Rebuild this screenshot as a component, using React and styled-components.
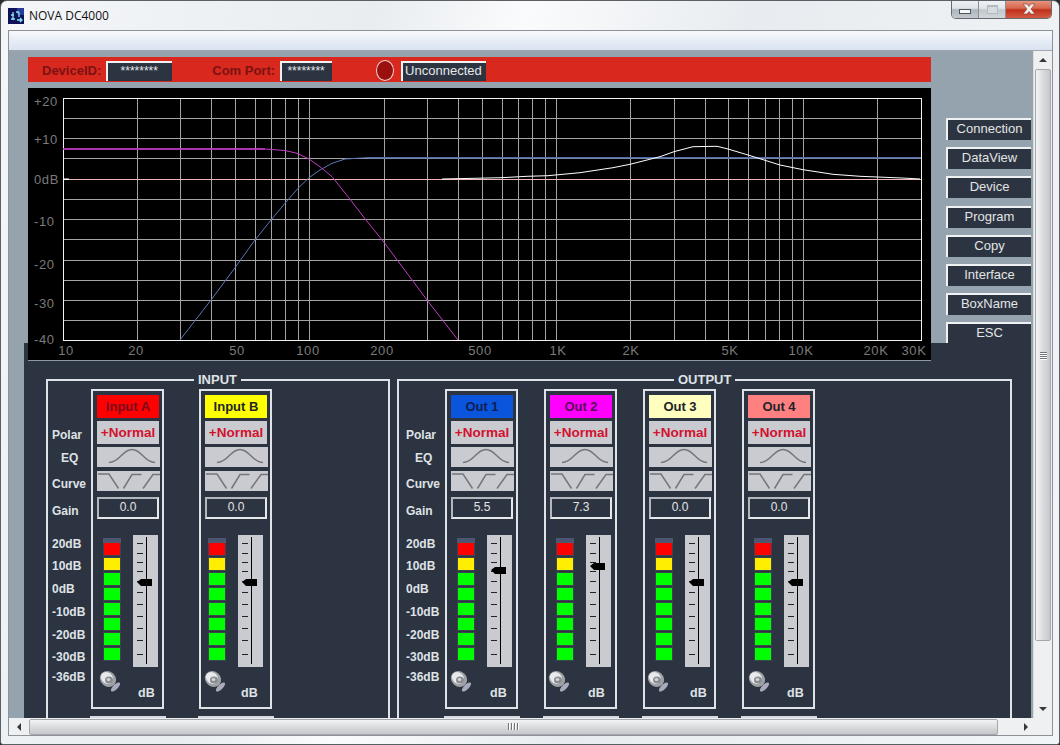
import React from 'react'
import styled, { createGlobalStyle } from 'styled-components'

const GlobalStyle = createGlobalStyle`
  html, body { margin: 0; padding: 0; background: #2a2c30; }
  * { box-sizing: border-box; }
  body { font-family: "Liberation Sans", Arial, sans-serif; }
`

const DARK = '#2d3441'
const LINE = '#dfe2e6'
const KEY = '#c9cbd0'

const Window = styled.div`
  width: 1060px;
  height: 745px;
  display: flex;
  flex-direction: column;
  overflow: hidden;
  border: 1px solid #5a6066;
  border-radius: 7px 7px 3px 3px;
  background: linear-gradient(105deg, #f4f6f8 0%, #e9edf0 30%, #fafbfc 42%, #e8ecf0 60%, #f2f5f7 100%);
`
const TitleBar = styled.div`
  height: 29px;
  flex: none;
  display: flex;
  align-items: flex-start;
  padding-left: 7px;
`
const AppIcon = styled.svg`
  width: 16px;
  height: 16px;
  margin-top: 7px;
`
const TitleText = styled.div`
  margin: 8px 0 0 5px;
  font-family: "Open Sans", sans-serif;
  font-size: 12px;
  line-height: 14px;
  color: #111;
`
const Controls = styled.div`
  margin-left: auto;
  margin-right: 7px;
  display: flex;
  height: 19px;
  margin-top: -1px;
  border: 1px solid #666b72;
  border-top: 0;
  border-radius: 0 0 5px 5px;
  overflow: hidden;
`
const Control = styled.div`
  width: ${p => p.$w}px;
  display: flex;
  align-items: center;
  justify-content: center;
  border-left: ${p => (p.$first ? '0' : '1px solid #8a9097')};
  background: ${p => p.$bg};
`
const MinMark = styled.div`
  width: 12px;
  height: 5px;
  margin-top: 5px;
  background: #f6f7f8;
  border: 1px solid #50555c;
`
const MaxMark = styled.div`
  width: 11px;
  height: 9px;
  border: 1px solid #b3bac1;
  border-top-width: 2px;
  background: #d6dbe0;
`

const Client = styled.div`
  margin: 0 6px 8px 7px;
  flex: 1;
  min-height: 0;
  display: flex;
  flex-direction: column;
  border: 1px solid #8d9298;
`
const MenuBar = styled.div`
  height: 20px;
  flex: none;
  border-bottom: 1px solid #a1a6ab;
  background: linear-gradient(#f8f9fc, #e6ecf6 55%, #d9e3f2);
`
const Middle = styled.div`
  flex: 1;
  min-height: 0;
  display: flex;
`
const Viewport = styled.div`
  flex: 1;
  min-width: 0;
  overflow: hidden;
  background: #95a3ae;
`
const TopArea = styled.div`
  height: 292px;
  padding: 6px 0 0 19px;
  display: flex;
`
const LeftColumn = styled.div`
  width: 903px;
  flex: none;
`
const StatusBar = styled.div`
  height: 25px;
  background: #d9281e;
  display: flex;
  align-items: flex-end;
  padding: 0 0 1px 14px;
`
const StatusLabel = styled.div`
  font-size: 13px;
  font-weight: 700;
  line-height: 20px;
  color: #7c1212;
  margin-left: ${p => p.$left || 0}px;
  margin-right: 5px;
  white-space: nowrap;
`
const Field = styled.div`
  width: ${p => p.$w}px;
  height: 20px;
  margin-left: ${p => p.$left || 0}px;
  background: ${DARK};
  border-top: 2px solid #f1f1f1;
  border-left: 2px solid #f1f1f1;
  color: #e6e8ea;
  font-size: ${p => (p.$stars ? 12 : 13)}px;
  line-height: 16px;
  text-align: ${p => (p.$stars ? 'center' : 'left')};
  padding: 0 ${p => (p.$stars ? 2 : 0)}px 0 ${p => (p.$stars ? 0 : 2)}px;
`
const Led = styled.div`
  width: 18px;
  height: 21px;
  margin: 0 0 0 44px;
  border-radius: 50%;
  background: #9c0f0f;
  border: 1px solid #ecd5d2;
`
const Chart = styled.div`
  position: relative;
  z-index: 1;
  margin-top: 6px;
  height: 273px;
  background: #000;
  border-bottom: 1px solid #8e9aa3;
`
const ChartSvg = styled.svg`
  display: block;
  width: 903px;
  height: 272px;
  text {
    font-family: "Liberation Sans", sans-serif;
    font-size: 13px;
    letter-spacing: 0.6px;
    fill: #7b7b7b;
  }
`
const SideMenu = styled.div`
  width: 85px;
  margin: 61px 0 0 15px;
  display: flex;
  flex-direction: column;
  gap: 7.2px;
`
const SideButton = styled.div`
  height: 22px;
  flex: none;
  background: ${DARK};
  border-top: 2px solid #f0f1f2;
  border-left: 2px solid #f0f1f2;
  color: #e2e4e6;
  font-size: 13px;
  line-height: 17px;
  text-align: center;
`
const Panel = styled.div`
  position: relative;
  margin-left: 15px;
  width: 1007px;
  height: 375px;
  overflow: hidden;
  background: ${DARK};
  padding: 36px 0 0 22px;
  display: flex;
  gap: 7px;
`
const Group = styled.div`
  position: relative;
  width: ${p => p.$w}px;
  height: 420px;
  flex: none;
  border: 2px solid ${LINE};
  padding: 8px 0 0 ${p => p.$inset}px;
  display: flex;
`
const Legend = styled.div`
  position: absolute;
  top: -9px;
  left: ${p => p.$left}px;
  padding: 0 4px;
  background: ${DARK};
  color: ${LINE};
  font-size: 13px;
  font-weight: 700;
  line-height: 15px;
`
const LabelColumn = styled.div`
  width: 39px;
  flex: none;
  padding-top: 38px;
`
const RowLabel = styled.div`
  height: ${p => p.$h}px;
  padding-left: ${p => p.$indent || 0}px;
  color: ${LINE};
  font-size: 12px;
  font-weight: 700;
  line-height: 16px;
  white-space: nowrap;
`
const Strips = styled.div`
  display: flex;
  gap: ${p => p.$gap}px;
`
const StripSlot = styled.div`
  width: 73px;
`
const Strip = styled.div`
  height: 320px;
  border: 2px solid ${LINE};
  padding: 4px 3px 0 4px;
`
const NextStrip = styled.div`
  width: 76px;
  margin: 7px 0 0 -1px;
  height: 3px;
  background: #d6d9de;
`
const Head = styled.div`
  height: 23px;
  margin-bottom: 3px;
  background: ${p => p.$bg};
  color: ${p => p.$fg};
  font-size: 13px;
  font-weight: 700;
  line-height: 23px;
  text-align: center;
`
const Polar = styled.div`
  height: 23px;
  margin-bottom: 3px;
  background: ${KEY};
  color: #d3122f;
  font-size: 13.5px;
  font-weight: 700;
  line-height: 23px;
  text-align: center;
`
const KeySvg = styled.svg`
  display: block;
  width: 63px;
  height: 20px;
  margin-bottom: ${p => p.$after}px;
  background: ${KEY};
`
const Gain = styled.div`
  height: 22px;
  border: 2px solid;
  border-color: #b4b8bd #e6e8ea #e6e8ea #b4b8bd;
  color: #e2e4e6;
  font-size: 12px;
  line-height: 17px;
  text-align: center;
`
const MeterRow = styled.div`
  margin: 16px 0 0 ${p => p.$nudge || 0}px;
  display: flex;
  height: 132px;
`
const Meter = styled.div`
  width: 18px;
  margin: 3px 0 0 6px;
  display: flex;
  flex-direction: column;
  align-items: center;
`
const MeterCap = styled.div`
  width: 18px;
  height: 5px;
  background: #4d5570;
`
const Segment = styled.div`
  width: 16px;
  height: 12px;
  margin-top: ${p => (p.$first ? 0 : 3)}px;
  background: ${p => p.$c};
  box-shadow: 0 0 0 1px rgba(90, 100, 110, 0.35);
`
const Fader = styled.div`
  position: relative;
  width: 25px;
  height: 132px;
  margin-left: 12px;
  background: ${KEY};
`
const FaderTrack = styled.svg`
  display: block;
  width: 25px;
  height: 132px;
`
const Knob = styled.svg`
  position: absolute;
  left: 4px;
  top: ${p => p.$top}px;
  width: 15px;
  height: 7px;
`
const FootRow = styled.div`
  margin: 2px 0 0 ${p => p.$left}px;
  display: flex;
`
const Speaker = styled.svg`
  width: 22px;
  height: 23px;
  flex: none;
`
const DbText = styled.div`
  margin: 16px 0 0 ${p => p.$left}px;
  color: ${LINE};
  font-size: 12.5px;
  font-weight: 700;
  line-height: 16px;
`

const VBar = styled.div`
  width: 19px;
  flex: none;
  display: flex;
  flex-direction: column;
  align-items: center;
  background: #eff0f1;
  border-left: 1px solid #dcdee0;
`
const HBar = styled.div`
  height: 17px;
  flex: none;
  display: flex;
  align-items: center;
  background: #eff0f1;
`
const ArrowBox = styled.div`
  flex: none;
  width: ${p => p.$w}px;
  height: ${p => p.$h}px;
  display: flex;
  align-items: center;
  justify-content: center;
`
const Arrow = styled.div`
  width: 0;
  height: 0;
  border: 4px solid transparent;
  ${p => p.$dir === 'up' && 'border-bottom-color: #33383d; border-top-width: 0;'}
  ${p => p.$dir === 'down' && 'border-top-color: #33383d; border-bottom-width: 0;'}
  ${p => p.$dir === 'left' && 'border-right-color: #33383d; border-left-width: 0;'}
  ${p => p.$dir === 'right' && 'border-left-color: #33383d; border-right-width: 0;'}
`
const VThumb = styled.div`
  width: 16px;
  height: 572px;
  flex: none;
  display: flex;
  flex-direction: column;
  align-items: center;
  justify-content: center;
  gap: 1px;
  border: 1px solid #a4a8ac;
  border-radius: 2px;
  background: linear-gradient(90deg, #f3f4f5, #d7d9db 55%, #c5c7ca);
`
const HThumb = styled.div`
  width: 969px;
  height: 16px;
  flex: none;
  display: flex;
  align-items: center;
  justify-content: center;
  gap: 1px;
  border: 1px solid #a4a8ac;
  border-radius: 2px;
  background: linear-gradient(#f3f4f5, #d7d9db 55%, #c5c7ca);
`
const GripV = styled.div`
  width: 7px;
  height: 1px;
  box-shadow: 0 1px 0 #fff;
  background: #70757a;
`
const GripH = styled.div`
  width: 1px;
  height: 7px;
  box-shadow: 1px 0 0 #fff;
  background: #70757a;
  margin-right: 1px;
`
const VSpace = styled.div`
  flex: 1;
`
const HSpace = styled.div`
  flex: 1;
`

const V_LINES = [137, 180, 211, 235, 255, 271, 285, 298, 309, 384, 427, 458, 482, 502, 518, 532, 545, 556, 630, 674, 705, 728, 748, 765, 779, 792, 803, 877]
const H_LINES = [118, 138, 158, 199, 219, 239, 260, 280, 300, 320]
const Y_LABELS = [['+20', 106], ['+10', 144], ['0dB', 184], ['-10', 226], ['-20', 269], ['-30', 308], ['-40', 344]]
const X_LABELS = [['10', 66], ['20', 136], ['50', 237], ['100', 308], ['200', 382], ['500', 480], ['1K', 558], ['2K', 631], ['5K', 730], ['10K', 801], ['20K', 876], ['30K', 914]]

const MAGENTA = [[63, 149], [265, 149], [285, 150.5], [297, 153.3], [309, 159], [320, 166.7], [332, 176.7], [348, 196.7], [366, 220], [384, 242.3], [427, 300], [458, 340]]
const BLUE = [[180, 340], [211, 300], [235, 267.7], [255, 240], [271, 220], [285, 203.3], [298, 188.3], [309, 177.7], [320, 170], [332, 163.3], [345, 159], [367, 157.7]]
const WHITE = [[442, 179], [502, 177.7], [527, 176.3], [548, 175.7], [580, 172.7], [613, 167.7], [630, 164.3], [660, 156.7], [674, 151.7], [693, 146.7], [717, 146.3], [728, 149], [748, 155], [765, 160.3], [780, 165], [803, 169.7], [833, 174.3], [860, 176.3], [902, 178], [920, 179]]

// chart data is in page coordinates, the svg starts at 28,88
const pts = list => list.map(([x, y]) => `${x - 28},${y - 88}`).join(' ')

const ResponseChart = () => (
  <Chart>
    <ChartSvg viewBox="0 0 903 272">
      <g stroke="#a4a4a4" strokeWidth="1" shapeRendering="crispEdges">
        {V_LINES.map(x => <line key={x} x1={x - 27.5} x2={x - 27.5} y1="10" y2="252" />)}
        {H_LINES.map(y => <line key={y} x1="35" x2="893" y1={y - 87.5} y2={y - 87.5} />)}
      </g>
      <rect x="35.5" y="10.5" width="857.5" height="242" fill="none" stroke="#f2f2f2" shapeRendering="crispEdges" />
      <rect x="35" y="91" width="858" height="1" fill="#f0b4ae" />
      <rect x="35" y="90.5" width="6" height="1.5" fill="#fff" />
      <polyline points={pts(BLUE)} fill="none" stroke="#5a78b4" />
      <line x1="339" x2="893" y1="69.7" y2="69.7" stroke="#4f6cae" strokeWidth="1.5" />
      <line x1="35" x2="237" y1="61" y2="61" stroke="#c23cc2" strokeWidth="1.5" />
      <polyline points={pts(MAGENTA)} fill="none" stroke="#c23cc2" />
      <polyline points={pts(WHITE)} fill="none" stroke="#fff" />
      {Y_LABELS.map(([t, y]) => <text key={t} x="6" y={y - 88}>{t}</text>)}
      {X_LABELS.map(([t, x]) => <text key={t} x={x - 28} y="267" textAnchor="middle">{t}</text>)}
    </ChartSvg>
  </Chart>
)

const EqKey = () => (
  <KeySvg $after={4} viewBox="0 0 63 20">
    <path d="M12 15.5C23 15.5 25 2.5 35 2.5S47 15.5 58 15.5" fill="none" stroke="#74767a" strokeWidth="1.5" />
  </KeySvg>
)

const CurveKey = () => (
  <KeySvg $after={6} viewBox="0 0 63 20">
    <path d="M1 3H12L21.5 17.5M26.5 17.5L35 3.5H44.5M46 17.5L56 3.5H63" fill="none" stroke="#74767a" strokeWidth="1.5" />
  </KeySvg>
)

const TICKS = [8, 18, 27, 36, 46, 57, 69, 81, 93, 105, 119]

const FaderControl = ({ top }) => (
  <Fader>
    <FaderTrack viewBox="0 0 25 132">
      <g stroke="#000" shapeRendering="crispEdges">
        <line x1="13.5" x2="13.5" y1="2" y2="129" />
        {TICKS.map(y => <line key={y} x1="4" x2="10" y1={y + 0.5} y2={y + 0.5} stroke="#222" />)}
      </g>
    </FaderTrack>
    <Knob $top={top} viewBox="0 0 15 7">
      <polygon points="0,3 4,0 15,0 15,7 4,7" fill="#000" />
    </Knob>
  </Fader>
)

const SpeakerIcon = () => (
  <Speaker viewBox="0 0 22 23">
    <ellipse cx="16.5" cy="18" rx="6" ry="2.4" transform="rotate(-45 16.5 18)" fill="#a9abbd" />
    <ellipse cx="9" cy="10" rx="8.5" ry="7.5" transform="rotate(40 9 10)" fill="#9fa1a5" />
    <ellipse cx="8" cy="9" rx="6.5" ry="5.5" transform="rotate(40 8 9)" fill="#e8e9eb" />
    <ellipse cx="10" cy="11" rx="4" ry="3.6" fill="#8a8c91" />
    <ellipse cx="9.5" cy="10.5" rx="1.8" ry="1.6" fill="#d4d6d9" />
  </Speaker>
)

const METER = ['#ff0000', '#ffee00', '#00ff00', '#00ff00', '#00ff00', '#00ff00', '#00ff00', '#00ff00']

const ChannelStrip = ({ name, bg, fg, gain, knob, nudge, foot, db }) => (
  <StripSlot>
    <Strip>
      <Head $bg={bg} $fg={fg}>{name}</Head>
      <Polar>+Normal</Polar>
      <EqKey />
      <CurveKey />
      <Gain>{gain}</Gain>
      <MeterRow $nudge={nudge}>
        <Meter>
          <MeterCap />
          {METER.map((c, i) => <Segment key={i} $c={c} $first={i === 0} />)}
        </Meter>
        <FaderControl top={knob} />
      </MeterRow>
      <FootRow $left={foot}>
        <SpeakerIcon />
        <DbText $left={db}>dB</DbText>
      </FootRow>
    </Strip>
    <NextStrip />
  </StripSlot>
)

const LABELS = [
  ['Polar', 23], ['EQ', 26, 9], ['Curve', 27], ['Gain', 33], ['20dB', 22], ['10dB', 23],
  ['0dB', 23], ['-10dB', 23], ['-20dB', 22], ['-30dB', 20], ['-36dB', 16],
]

const RowLabels = () => (
  <LabelColumn>
    {LABELS.map(([t, h, indent]) => <RowLabel key={t} $h={h} $indent={indent}>{t}</RowLabel>)}
  </LabelColumn>
)

const INPUTS = [
  { name: 'Input A', bg: '#ff0000', fg: '#7a0a1e', gain: '0.0', knob: 44, nudge: 0, foot: 2, db: 17 },
  { name: 'Input B', bg: '#ffff00', fg: '#23262c', gain: '0.0', knob: 44, nudge: -3, foot: -1, db: 15 },
]
const OUTPUTS = [
  { name: 'Out 1', bg: '#0a55dc', fg: '#0e1f55', gain: '5.5', knob: 32, nudge: 0, foot: -1, db: 18 },
  { name: 'Out 2', bg: '#ff00ff', fg: '#5a0e5a', gain: '7.3', knob: 28, nudge: 0, foot: -2, db: 18 },
  { name: 'Out 3', bg: '#ffffc0', fg: '#20232a', gain: '0.0', knob: 44, nudge: 0, foot: -2, db: 21 },
  { name: 'Out 4', bg: '#ff8080', fg: '#20232a', gain: '0.0', knob: 44, nudge: 0, foot: 0, db: 17 },
]
const MENU = ['Connection', 'DataView', 'Device', 'Program', 'Copy', 'Interface', 'BoxName', 'ESC']

export default function App() {
  return (
    <>
      <GlobalStyle />
      <Window>
        <TitleBar>
          <AppIcon viewBox="0 0 16 16">
            <rect width="16" height="16" fill="#10105a" />
            <rect x="9" y="0" width="7" height="7" fill="#2a3a9a" />
            <path d="M3 11h4M5 4v8M8 4h3M11 4v5M9 12h5M12 10l2 2-2 2M3 7h3" stroke="#7fe8ee" strokeWidth="1.3" fill="none" />
          </AppIcon>
          <TitleText>NOVA DC4000</TitleText>
          <Controls>
            <Control $w={26} $first $bg="linear-gradient(#f0f3f6, #dfe4e9 45%, #aeb6bd 55%, #c2c8ce)"><MinMark /></Control>
            <Control $w={27} $bg="linear-gradient(#f0f3f6, #e2e6ea 45%, #c2c8ce 55%, #d2d6da)"><MaxMark /></Control>
            <Control $w={46} $bg="linear-gradient(#e79a85, #d9674f 45%, #c0301c 55%, #d45a42)">
              <svg width="16" height="12" viewBox="0 0 16 12">
                <path d="M2 1h4l2 2.5L10 1h4L10 6l4 5h-4L8 8.5 6 11H2l4-5z" fill="#f4f0ee" stroke="#7a3a30" strokeWidth="0.6" />
              </svg>
            </Control>
          </Controls>
        </TitleBar>
        <Client>
          <MenuBar />
          <Middle>
            <Viewport>
              <TopArea>
                <LeftColumn>
                  <StatusBar>
                    <StatusLabel>DeviceID:</StatusLabel>
                    <Field $w={66} $stars>********</Field>
                    <StatusLabel $left={40}>Com Port:</StatusLabel>
                    <Field $w={52} $stars>********</Field>
                    <Led />
                    <Field $w={85} $left={7}>Unconnected</Field>
                  </StatusBar>
                  <ResponseChart />
                </LeftColumn>
                <SideMenu>
                  {MENU.map(m => <SideButton key={m}>{m}</SideButton>)}
                </SideMenu>
              </TopArea>
              <Panel>
                <Group $w={344} $inset={4}>
                  <Legend $left={146}>INPUT</Legend>
                  <RowLabels />
                  <Strips $gap={35}>
                    {INPUTS.map(c => <ChannelStrip key={c.name} {...c} />)}
                  </Strips>
                </Group>
                <Group $w={615} $inset={7}>
                  <Legend $left={275}>OUTPUT</Legend>
                  <RowLabels />
                  <Strips $gap={26}>
                    {OUTPUTS.map(c => <ChannelStrip key={c.name} {...c} />)}
                  </Strips>
                </Group>
              </Panel>
            </Viewport>
            <VBar>
              <ArrowBox $w={17} $h={18}><Arrow $dir="up" /></ArrowBox>
              <VThumb><GripV /><GripV /><GripV /><GripV /></VThumb>
              <VSpace />
              <ArrowBox $w={17} $h={18}><Arrow $dir="down" /></ArrowBox>
            </VBar>
          </Middle>
          <HBar>
            <ArrowBox $w={20} $h={17}><Arrow $dir="left" /></ArrowBox>
            <HThumb><GripH /><GripH /><GripH /><GripH /></HThumb>
            <HSpace />
            <ArrowBox $w={56} $h={17}><Arrow $dir="right" /></ArrowBox>
          </HBar>
        </Client>
      </Window>
    </>
  )
}
